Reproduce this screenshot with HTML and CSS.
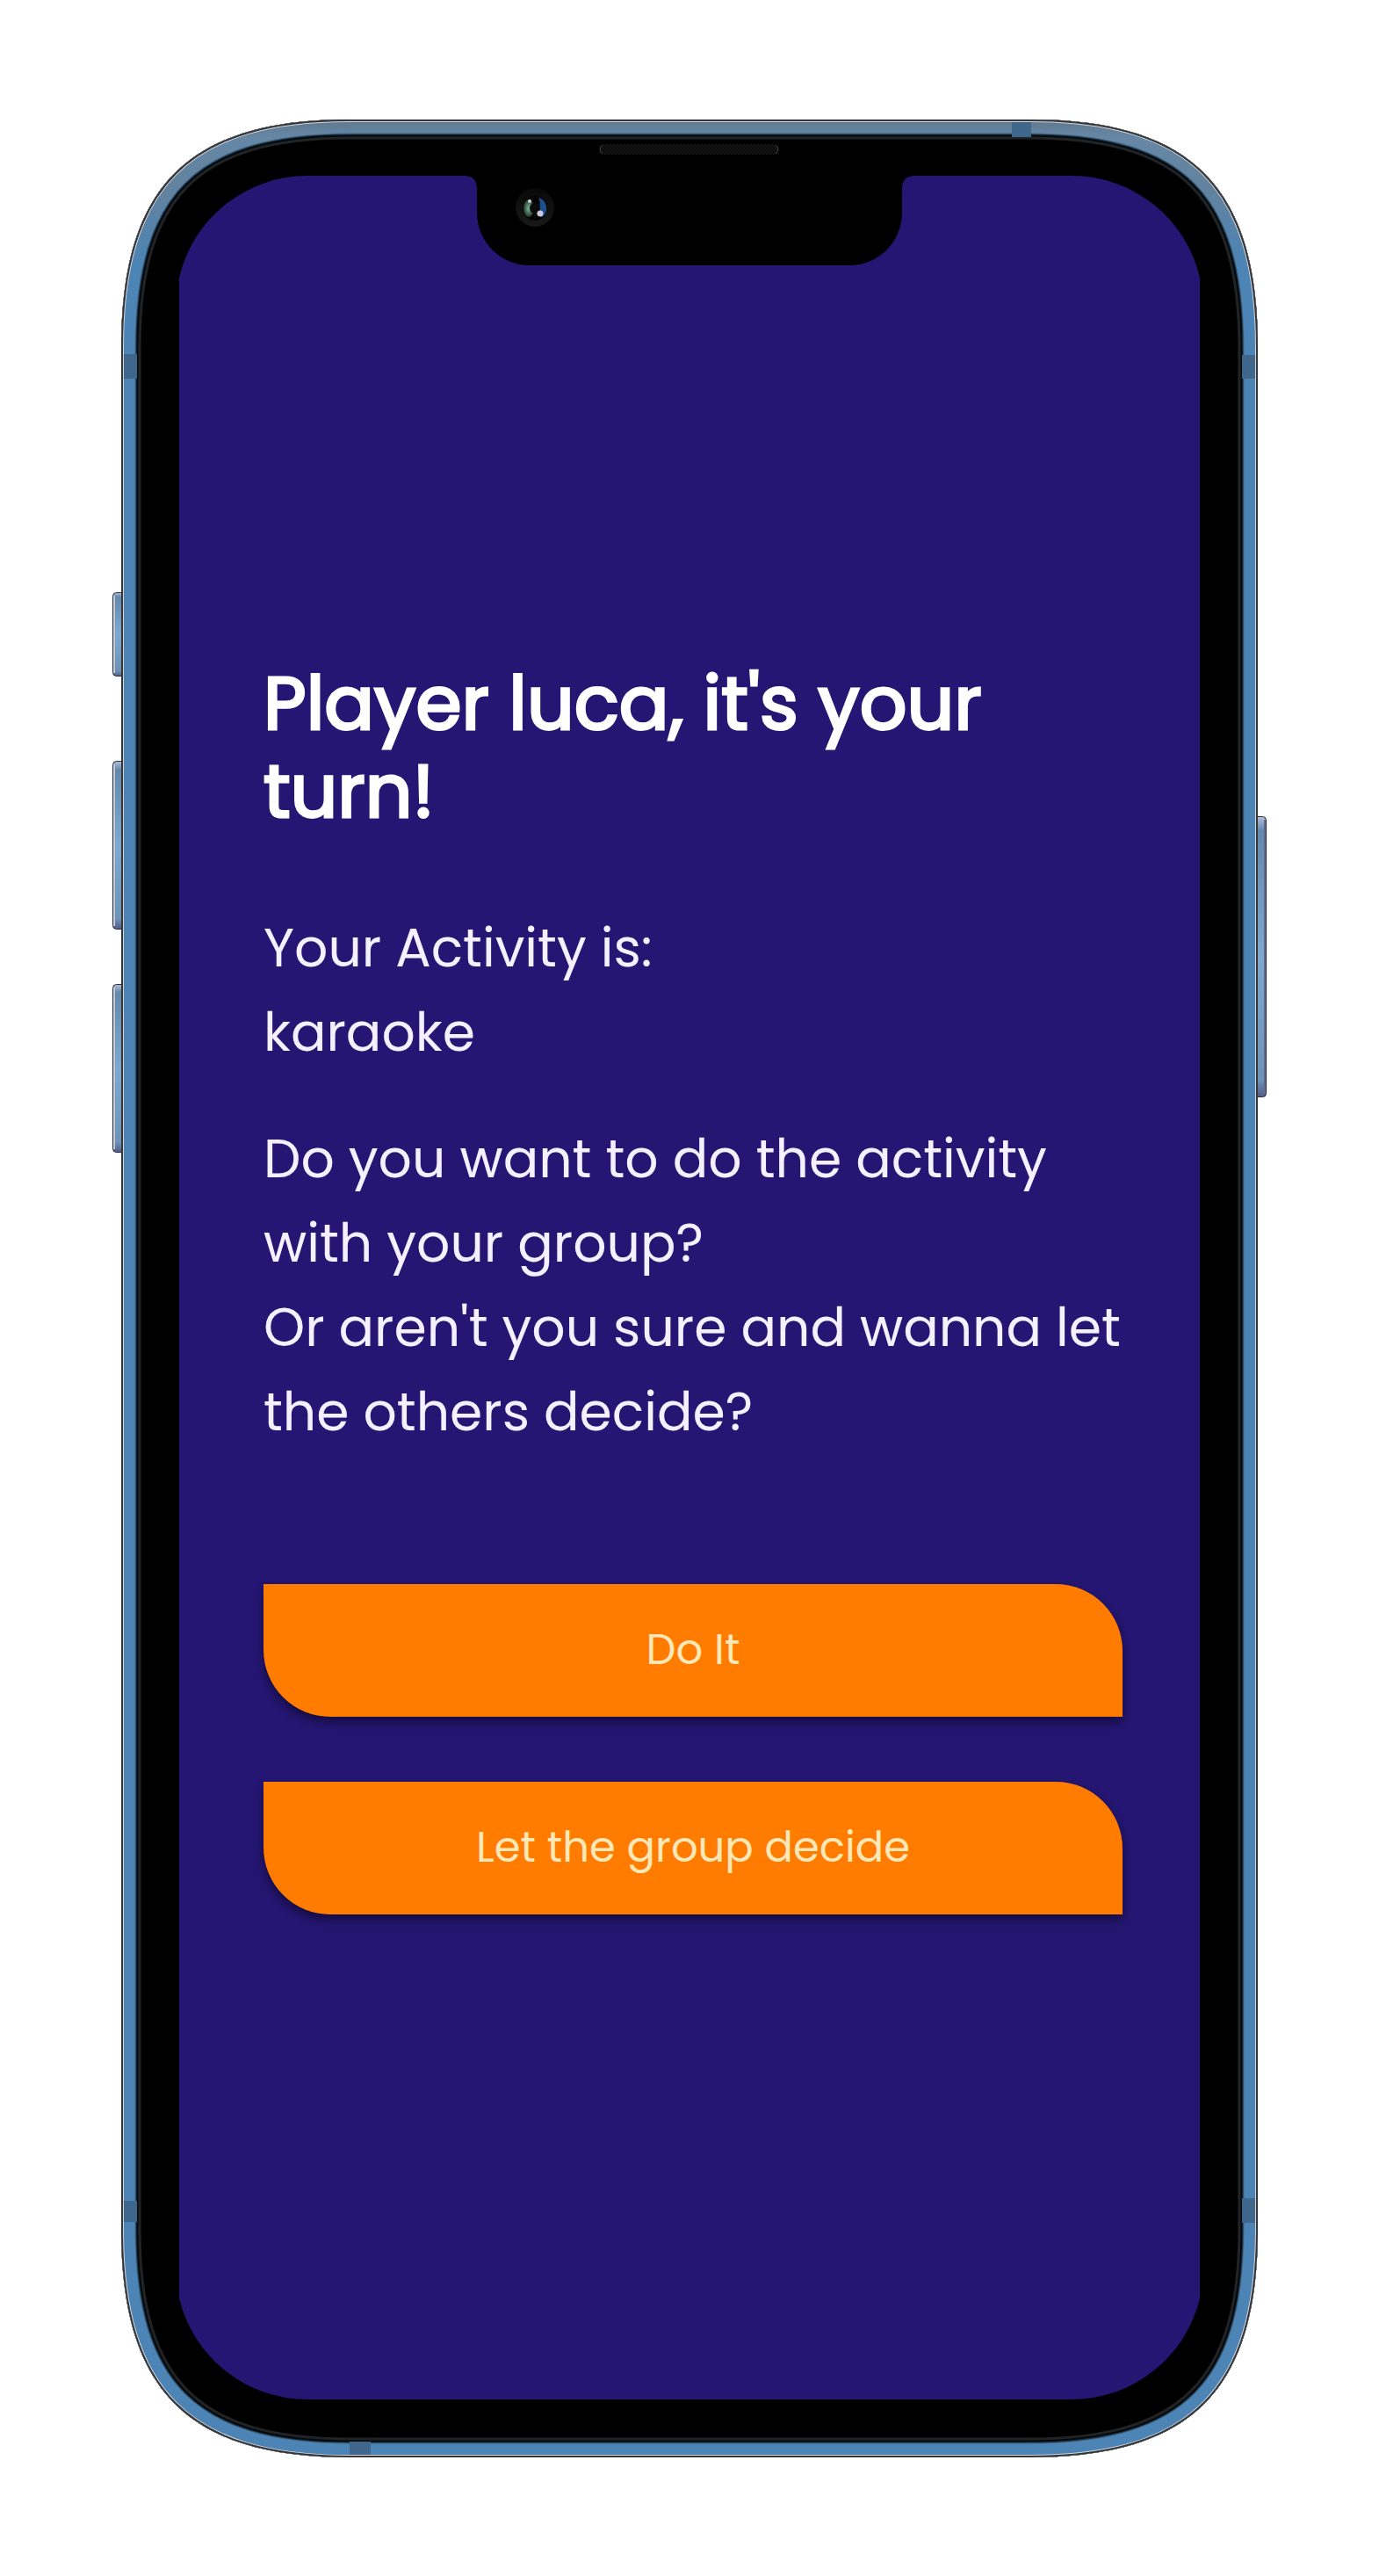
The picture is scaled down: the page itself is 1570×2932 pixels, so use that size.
FILE: index.html
```html
<!DOCTYPE html>
<html lang="en">
<head>
  <meta charset="utf-8">
  <meta name="viewport" content="width=device-width, initial-scale=1">
  <title>Your turn</title>
  <link rel="stylesheet" href="styles.css">
</head>
<body>
  <div class="phone">
    <svg class="phone-frame" viewBox="128 136 1314 2661" aria-hidden="true">
      <defs>
        <path id="shell" d="M138 396C138 212 214 136 398 136H1172C1356 136 1432 212 1432 396V2537C1432 2721 1356 2797 1172 2797H398C214 2797 138 2721 138 2537Z"/>
        <clipPath id="shell-clip"><use href="#shell"/></clipPath>
        <linearGradient id="metal" gradientUnits="userSpaceOnUse" x1="0" y1="136" x2="0" y2="300">
          <stop offset="0" stop-color="#5f788d"/>
          <stop offset=".12" stop-color="#6687a5"/>
          <stop offset=".5" stop-color="#62839f"/>
          <stop offset="1" stop-color="#4b84b5"/>
        </linearGradient>
        <linearGradient id="key" x1="0" y1="0" x2="0" y2="1">
          <stop offset="0" stop-color="#b4bedb"/>
          <stop offset=".05" stop-color="#6488aa"/>
          <stop offset=".5" stop-color="#7fa8cf"/>
          <stop offset=".94" stop-color="#6d92b5"/>
          <stop offset="1" stop-color="#545b87"/>
        </linearGradient>
        <linearGradient id="lens-ring" x1="0" y1="0" x2="0" y2="1">
          <stop offset="0" stop-color="#080808"/>
          <stop offset="1" stop-color="#191919"/>
        </linearGradient>
        <radialGradient id="lens-green">
          <stop offset="0" stop-color="#7db795"/>
          <stop offset="1" stop-color="#24382f"/>
        </radialGradient>
        <pattern id="mesh" width="4" height="4" patternUnits="userSpaceOnUse">
          <rect width="4" height="4" fill="#141414"/>
          <rect width="2" height="2" fill="#090909"/>
          <rect x="2" y="2" width="2" height="2" fill="#090909"/>
        </pattern>
      </defs>

      <g fill="url(#key)" stroke="#2b2e38" stroke-width="1">
        <rect x="128.500" y="674.500" width="16" height="95" rx="4"/>
        <rect x="128.500" y="866.500" width="16" height="191" rx="4"/>
        <rect x="128.500" y="1120.500" width="16" height="191" rx="4"/>
        <rect x="1425.500" y="929.500" width="16" height="319" rx="4"/>
      </g>
      <g fill="#c3cad8">
        <rect x="129" y="678" width="2" height="88"/>
        <rect x="129" y="870" width="2" height="184"/>
        <rect x="129" y="1124" width="2" height="184"/>
      </g>
      <rect x="1439" y="933" width="2" height="312" fill="#5b6d90"/>

      <g clip-path="url(#shell-clip)" fill="none">
        <use href="#shell" fill="#000"/>
        <use href="#shell" stroke="#202426" stroke-width="45"/>
        <use href="#shell" stroke="#05090c" stroke-width="39"/>
        <use href="#shell" stroke="#1d3448" stroke-width="35"/>
        <use href="#shell" stroke="#40698b" stroke-width="33"/>
        <use href="#shell" stroke="url(#metal)" stroke-width="31"/>
        <g fill="#3f678c">
          <rect x="1152" y="139" width="22" height="17"/>
          <rect x="141" y="403" width="15" height="28"/>
          <rect x="1414" y="404" width="15" height="27"/>
          <rect x="141" y="2505" width="15" height="24"/>
          <rect x="1414" y="2502" width="15" height="28"/>
          <rect x="398" y="2779" width="24" height="15"/>
        </g>
        <use href="#shell" stroke="#d5d5dc" stroke-width="6"/>
        <use href="#shell" stroke="#363636" stroke-width="4"/>
      </g>

      <path fill="#241672" d="M204 316A150 150 0 0 1 350 200H528Q543 200 543 215V242A60 60 0 0 0 603 302H967A60 60 0 0 0 1027 242V215Q1027 200 1042 200H1220A150 150 0 0 1 1366 316V2616A150 150 0 0 1 1220 2731H350A150 150 0 0 1 204 2616Z"/>

      <rect x="682" y="164" width="205" height="12" rx="6" fill="url(#mesh)"/>
      <path d="M686 165a6 6 0 0 0 0 10M883 165a6 6 0 0 1 0 10" fill="none" stroke="#444" stroke-width="1"/>

      <circle cx="609" cy="236" r="22" fill="url(#lens-ring)"/>
      <circle cx="609" cy="237" r="14" fill="#050505"/>
      <ellipse cx="602" cy="237" rx="6" ry="10" fill="url(#lens-green)"/>
      <path d="M613 225C624 228 625 242 617 247L610 243Q618 236 613 225Z" fill="#1c4f8c"/>
      <circle cx="609" cy="237" r="6" fill="#0b0b0c"/>
      <circle cx="603" cy="229" r="2" fill="#c7d3ce"/>
      <circle cx="615" cy="243" r="3.500" fill="#cdc9dc"/>
    </svg>

    <main class="turn">
      <h1 class="turn-title">Player luca, it's your turn!</h1>
      <p class="turn-text">Your Activity is:<br>karaoke</p>
      <p class="turn-text">Do you want to do the activity with your group?<br>Or aren't you sure and wanna let the others decide?</p>
      <div class="actions">
        <button class="action" type="button">Do It</button>
        <button class="action" type="button">Let the group decide</button>
      </div>
    </main>
  </div>
</body>
</html>
```
FILE: styles.css
```css
* {
  box-sizing: border-box;
}

body {
  margin: 0;
  padding: 136px 128px 135px;
  background: #fff;
  font-family: Poppins, Inter, "Liberation Sans", sans-serif;
}

.phone {
  display: grid;
}

.phone-frame,
.turn {
  grid-area: 1 / 1;
  min-width: 0;
}

.phone-frame {
  display: block;
  width: 100%;
}

.turn {
  display: flex;
  flex-direction: column;
  justify-content: center;
  gap: 48px;
  padding: 0 164px 4px 172px;
  color: #fff;
}

/* Regular cut thickened with a stroke, so the letters keep their narrow set. */
.turn-title {
  margin: 0 0 32px;
  font-size: 84px;
  font-weight: 400;
  line-height: 100px;
  -webkit-text-stroke: 3px #fff;
}

.turn-text {
  margin: 0;
  color: #f4f0ff;
  font-size: 60px;
  line-height: 96px;
}

.actions {
  display: grid;
  gap: 74px;
  margin-top: 100px;
}

.action {
  height: 151px;
  border: 0;
  border-radius: 0 76px;
  background: #ff7c00;
  box-shadow: 0 6px 12px rgba(0, 0, 0, 0.45);
  color: #ffe8b8;
  font: inherit;
  font-size: 48px;
}
```
